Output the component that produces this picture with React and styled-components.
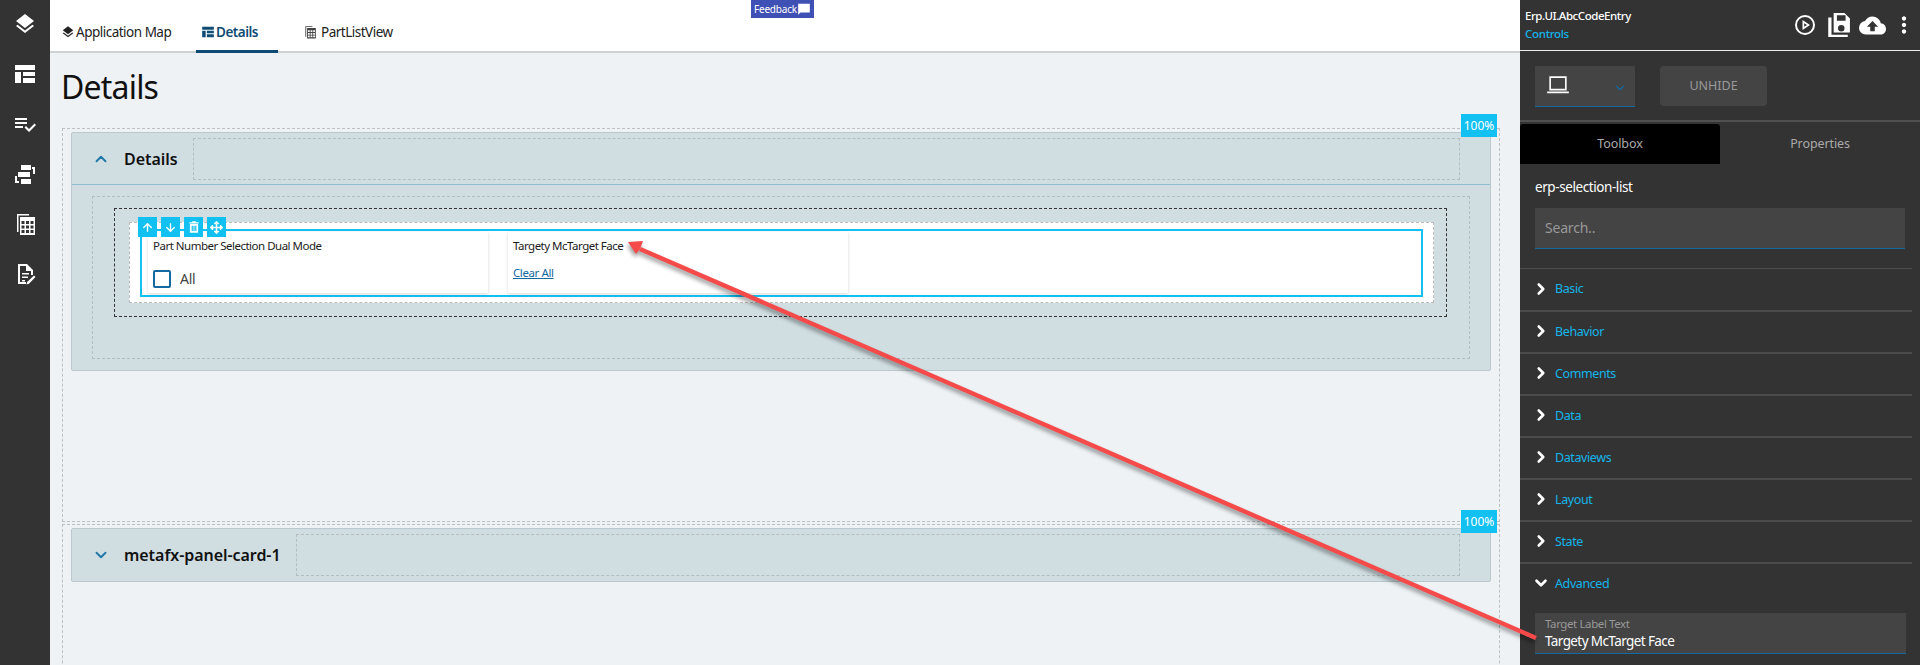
import styled, { createGlobalStyle } from "styled-components";
import { ChevronRight, ChevronDown, ChevronUp, ArrowUp, ArrowDown } from "lucide-react";
import { MdCloudUpload, MdMoreVert } from "react-icons/md";
import { FaArrowsAlt } from "react-icons/fa";

const FONT = `"Noto Sans", "Open Sans", sans-serif`;

const GlobalStyle = createGlobalStyle`
  html, body {
    margin: 0;
    height: 665px;
    overflow: hidden;
    background: #eef2f5;
    font-family: ${FONT};
  }
  * { box-sizing: border-box; }
`;

const Page = styled.div`
  position: relative;
  display: flex;
  width: 1920px;
  height: 665px;
  overflow: hidden;
`;

const Sidebar = styled.nav`
  width: 50px;
  flex: none;
  background: #333333;
  display: flex;
  flex-direction: column;
  align-items: center;
  padding-top: 12px;
  gap: 26px;
`;

const Icon = styled.svg`
  width: ${(p) => p.$size || 24}px;
  height: ${(p) => p.$size || 24}px;
  fill: ${(p) => p.$color || "currentColor"};
  flex: none;
`;

const SideIcon = styled(Icon)`
  width: 24px;
  height: 24px;
  fill: #fff;
`;

const Main = styled.main`
  flex: 1;
  min-width: 0;
  display: flex;
  flex-direction: column;
`;

const TabBar = styled.div`
  height: 53px;
  flex: none;
  background: #fff;
  border-bottom: 2px solid #cfd2d4;
  display: flex;
  align-items: flex-end;
  padding-left: 11px;
`;

const Tab = styled.div`
  display: flex;
  align-items: center;
  gap: 1px;
  height: 34px;
  width: ${(p) => p.$width}px;
  padding-left: ${(p) => p.$inset || 0}px;
  margin-bottom: -2px;
  padding-bottom: 5px;
  font-size: 13.5px;
  letter-spacing: -0.5px;
  color: ${(p) => (p.$active ? "#0f4c75" : "#222")};
  font-weight: ${(p) => (p.$active ? 600 : 400)};
  border-bottom: 3px solid ${(p) => (p.$active ? "#0f4c75" : "transparent")};
`;

const Content = styled.div`
  flex: 1;
  padding: 0 20px 0 12px;
  background: #eef2f5;
`;

const PageTitle = styled.h1`
  margin: 0 0 0 -1px;
  height: 75px;
  font-size: 32px;
  line-height: 68px;
  font-weight: 400;
  letter-spacing: -0.8px;
  color: #111;
`;

const SectionFrame = styled.section`
  position: relative;
  height: ${(p) => p.$height}px;
  margin-bottom: 2px;
  padding: 3px 8px;
  border: 1px dashed #bcc0c2;
`;

const PercentBadge = styled.div`
  position: absolute;
  top: -15px;
  right: 2px;
  width: 36px;
  height: 23px;
  background: #13c0f2;
  color: #fff;
  font-size: 12px;
  line-height: 23px;
  text-align: center;
`;

const Panel = styled.div`
  background: #d0dde1;
  border: 1px solid #b9c9cf;
  border-radius: 2px;
`;

const PanelHeader = styled.div`
  height: 52px;
  display: flex;
  align-items: center;
  padding: 0 30px 0 20px;
  border-bottom: ${(p) => (p.$open ? "1px solid #90bccb" : "none")};
`;

const HeaderChevron = styled.span`
  width: 18px;
  display: flex;
  justify-content: center;
  color: #1f78a8;
  margin-right: 14px;
`;

const PanelName = styled.span`
  font-size: 16px;
  font-weight: 600;
  letter-spacing: -0.05px;
  color: #111;
  margin-right: 15px;
`;

const HeaderSlot = styled.div`
  flex: 1;
  height: 42px;
  border: 1px dashed #b4bdc0;
`;

const PanelBody = styled.div`
  padding: 11px 20px;
`;

const DropZone = styled.div`
  border: 1px dashed #b4bdc0;
  padding: 11px 22px 41px 21px;
`;

const ContainerZone = styled.div`
  border: 1px dashed #333;
  padding: 13px 12px 13px 14px;
`;

const SelectedFrame = styled.div`
  position: relative;
  background: #fff;
  border: 1px dashed #bbb;
  padding: 6px 10px 5px 10px;
`;

const MoveBar = styled.div`
  position: absolute;
  top: -6px;
  left: 8px;
  display: flex;
  gap: 4px;
`;

const MoveButton = styled.div`
  width: 19px;
  height: 20px;
  background: #13c0f2;
  color: #fff;
  display: flex;
  align-items: center;
  justify-content: center;
`;

const SelectedRow = styled.div`
  height: 68px;
  border: 2px solid #13c0f2;
  padding: 1px 6px;
  display: flex;
  gap: 20px;
`;

const Card = styled.div`
  width: 340px;
  height: 61px;
  background: #fff;
  box-shadow: 0 1px 3px rgba(0, 0, 0, 0.16);
  padding: 6px 5px 5px;
  display: flex;
  flex-direction: column;
`;

const CardLabel = styled.div`
  font-size: 11.5px;
  line-height: 16px;
  letter-spacing: -0.5px;
  color: #1c1c1c;
`;

const CheckRow = styled.div`
  margin-top: 15px;
  display: flex;
  align-items: center;
  gap: 9px;
  font-size: 14px;
  letter-spacing: -0.3px;
  color: #444;
`;

const CheckBox = styled.span`
  width: 18px;
  height: 18px;
  border: 2px solid #1469a0;
  border-radius: 2px;
`;

const ClearLink = styled.a`
  margin-top: 11px;
  font-size: 11.5px;
  letter-spacing: -0.4px;
  color: #1469a0;
  text-decoration: underline;
`;

const Feedback = styled.div`
  position: absolute;
  top: 0;
  left: 751px;
  width: 63px;
  height: 18px;
  background: #3f51b5;
  color: #fff;
  font-size: 10px;
  letter-spacing: -0.2px;
  display: flex;
  align-items: center;
  justify-content: space-between;
  padding: 0 3px;
`;

const RightPanel = styled.aside`
  width: 400px;
  flex: none;
  background: #333333;
  color: #fff;
  display: flex;
  flex-direction: column;
`;

const PanelTop = styled.div`
  height: 51px;
  flex: none;
  border-bottom: 1px solid #eee;
  display: flex;
  align-items: center;
  justify-content: space-between;
  padding: 0 3px 0 5px;
`;

const TopTitle = styled.div`
  font-size: 11.5px;
  line-height: 18px;
  letter-spacing: -0.45px;
  font-weight: 500;
`;

const TopLink = styled.div`
  color: #13b5ea;
  letter-spacing: -0.3px;
`;

const TopActions = styled.div`
  display: flex;
  align-items: center;
  gap: 8px;
  color: #fff;
`;

const MoreButton = styled(MdMoreVert)`
  margin-left: -3px;
`;

const DeviceRow = styled.div`
  height: 71px;
  flex: none;
  padding: 15px 15px 0;
  display: flex;
  gap: 25px;
  border-bottom: 2px solid #505050;
`;

const DeviceSelect = styled.div`
  width: 100px;
  height: 41px;
  background: #444;
  border-bottom: 1px solid #1469a0;
  display: flex;
  align-items: center;
  justify-content: space-between;
  padding: 0 8px 2px 10px;
  color: #1469a0;
`;

const DeviceChevron = styled(ChevronDown)`
  margin-top: 5px;
`;

const UnhideButton = styled.div`
  width: 107px;
  height: 40px;
  background: #444;
  border-radius: 4px;
  color: #9a9a9a;
  font-size: 12.5px;
  text-align: center;
  line-height: 40px;
`;

const PanelTabs = styled.div`
  height: 40px;
  flex: none;
  margin-top: 2px;
  display: flex;
`;

const PanelTab = styled.div`
  width: 200px;
  background: ${(p) => (p.$active ? "#000" : "transparent")};
  border-radius: 3px 3px 0 0;
  font-size: 12.5px;
  letter-spacing: -0.1px;
  color: #aaa;
  line-height: 40px;
  text-align: center;
`;

const ToolboxBody = styled.div`
  padding: 15px 15px 0;
`;

const ToolboxName = styled.div`
  font-size: 13.5px;
  line-height: 16px;
  letter-spacing: -0.42px;
  color: #fff;
`;

const SearchBox = styled.div`
  margin-top: 13px;
  height: 41px;
  background: #444;
  border-bottom: 1px solid #1469a0;
  color: #999;
  font-size: 14px;
  letter-spacing: -0.2px;
  padding: 0 10px;
  line-height: 40px;
`;

const Accordion = styled.div`
  margin-top: 19px;
  margin-right: 8px;
`;

const AccordionRow = styled.div`
  height: 42px;
  border-top: ${(p) => (p.$thin ? "1px" : "2px")} solid #4b4b4b;
  display: flex;
  align-items: center;
  padding: 0 0 2px 12px;
  gap: 5px;
  font-size: 12.5px;
  letter-spacing: -0.4px;
  color: #13b5ea;
  svg { color: #fff; }
`;

const AdvancedField = styled.div`
  margin: 9px 14px 0 15px;
  height: 41px;
  background: #444;
  border-bottom: 1px solid #1469a0;
  padding: 3px 10px 0;
`;

const FieldLabel = styled.div`
  font-size: 11.5px;
  line-height: 15px;
  letter-spacing: -0.4px;
  color: #999;
`;

const FieldValue = styled.div`
  margin-top: 1px;
  font-size: 13.5px;
  line-height: 18px;
  letter-spacing: -0.6px;
  color: #fff;
`;

const ArrowOverlay = styled.svg`
  position: absolute;
  top: 0;
  left: 0;
  width: 1920px;
  height: 665px;
  pointer-events: none;
  filter: drop-shadow(-1px 3px 2px rgba(0, 0, 0, 0.4));
`;

const LayersPath = "M11.99 18.54l-7.37-5.73L3 14.07l9 7 9-7-1.63-1.27-7.38 5.74zM12 16l7.36-5.73L21 9l-9-7-9 7 1.63 1.27L12 16z";
const QuiltPath = "M2 3h20v5H2zM2 10h6v11H2zM10 10h12v4H10zM10 16h12v5H10z";
const CheckListPath = "M14 10H2v2h12v-2zm0-4H2v2h12V6zM2 16h8v-2H2v2zm19.5-4.5L23 13l-6.99 7-4.51-4.5L13 14l3.01 3 5.49-5.5z";
const FlowPath = "M8 3h10v5H8zM5 10h12v5H5zM8 17h10v5H8zM19 5h3v7h-2V7h-1zM4 14v5h2v2H2v-7z";
const GridPath = "M4 2h12v1.5H5.5V20H4zM7 5h15v18H7zm1.5 4v3h3V9zm4.5 0v3h3V9zm4.5 0v3h3V9zm-9 4.5v3h3v-3zm4.5 0v3h3v-3zm4.5 0v3h3v-3zm-9 4.5v3h3v-3zm4.5 0v3h3v-3zm4.5 0v3h3v-3z";
const DocEditPath = "M5 2h9l6 6v5h-2V9h-5V4H7v16h6v2H5zM9 11h7v1.5H9zM9 14.5h6V16H9zM9 18h3v1.5H9zM21 13.5l1.5 1.5-6.5 6.8-2.6.7.7-2.6z";
const SavePath = "M8 1h10l5 5v13H8zm3 2v5h8V3zm4 9a3 3 0 1 0 0 6 3 3 0 0 0 0-6zM3 5h3v16h15v2H3z";

const sections = ["Basic", "Behavior", "Comments", "Data", "Dataviews", "Layout", "State"];

const App = () => {
  return (
    <Page>
      <GlobalStyle />
      <Sidebar>
        <SideIcon viewBox="0 0 24 24"><path d={LayersPath} /></SideIcon>
        <SideIcon viewBox="0 0 24 24"><path d={QuiltPath} /></SideIcon>
        <SideIcon viewBox="0 0 24 24"><path d={CheckListPath} /></SideIcon>
        <SideIcon viewBox="0 0 24 24"><path d={FlowPath} /></SideIcon>
        <SideIcon viewBox="0 0 24 24"><path d={GridPath} /></SideIcon>
        <SideIcon viewBox="0 0 24 24"><path d={DocEditPath} /></SideIcon>
      </Sidebar>

      <Main>
        <TabBar>
          <Tab $width={135}>
            <Icon $size={14} viewBox="0 0 24 24"><path d={LayersPath} /></Icon>
            Application Map
          </Tab>
          <Tab $width={82} $active $inset={5}>
            <Icon $size={14} viewBox="0 0 24 24"><path d={QuiltPath} /></Icon>
            Details
          </Tab>
          <Tab $width={200} $inset={25}>
            <Icon $size={14} $color="#444" viewBox="0 0 24 24"><path d={GridPath} /></Icon>
            &nbsp;PartListView
          </Tab>
        </TabBar>
        <Content>
          <PageTitle>Details</PageTitle>
          <SectionFrame $height={394}>
            <PercentBadge>100%</PercentBadge>
            <Panel>
              <PanelHeader $open>
                <HeaderChevron><ChevronUp size={18} strokeWidth={2.5} /></HeaderChevron>
                <PanelName>Details</PanelName>
                <HeaderSlot />
              </PanelHeader>
              <PanelBody>
                <DropZone>
                  <ContainerZone>
                    <SelectedFrame>
                      <MoveBar>
                        <MoveButton><ArrowUp size={13} strokeWidth={2.5} /></MoveButton>
                        <MoveButton><ArrowDown size={13} strokeWidth={2.5} /></MoveButton>
                        <MoveButton>
                          <Icon $size={14} viewBox="0 0 24 24">
                            <path d="M9 2h6v2h5v2H4V4h5zM5 7h14v15H5zm3 3v9h2v-9zm3 0v9h2v-9zm3 0v9h2v-9z" />
                          </Icon>
                        </MoveButton>
                        <MoveButton><FaArrowsAlt size={13} /></MoveButton>
                      </MoveBar>
                      <SelectedRow>
                        <Card>
                          <CardLabel>Part Number Selection Dual Mode</CardLabel>
                          <CheckRow>
                            <CheckBox />
                            All
                          </CheckRow>
                        </Card>
                        <Card>
                          <CardLabel>Targety McTarget Face</CardLabel>
                          <ClearLink>Clear All</ClearLink>
                        </Card>
                      </SelectedRow>
                    </SelectedFrame>
                  </ContainerZone>
                </DropZone>
              </PanelBody>
            </Panel>
          </SectionFrame>
          <SectionFrame $height={200}>
            <PercentBadge>100%</PercentBadge>
            <Panel>
              <PanelHeader>
                <HeaderChevron><ChevronDown size={18} strokeWidth={2.5} /></HeaderChevron>
                <PanelName>metafx-panel-card-1</PanelName>
                <HeaderSlot />
              </PanelHeader>
            </Panel>
          </SectionFrame>
        </Content>
      </Main>

      <RightPanel>
        <PanelTop>
          <TopTitle>
            Erp.UI.AbcCodeEntry
            <TopLink>Controls</TopLink>
          </TopTitle>
          <TopActions>
            <Icon $size={24} viewBox="0 0 24 24">
              <path fillRule="evenodd" d="M12 2a10 10 0 1 1 0 20 10 10 0 0 1 0-20zm0 2a8 8 0 1 0 0 16 8 8 0 0 0 0-16z" />
              <path fillRule="evenodd" d="M9.5 7l7.5 5-7.5 5zm1.7 3.2v3.6l2.8-1.8z" />
            </Icon>
            <Icon $size={26} viewBox="0 0 24 24"><path fillRule="evenodd" d={SavePath} /></Icon>
            <MdCloudUpload size={27} />
            <MoreButton size={26} />
          </TopActions>
        </PanelTop>
        <DeviceRow>
          <DeviceSelect>
            <Icon $size={26} $color="#fff" viewBox="0 0 24 24">
              <path fillRule="evenodd" d="M4 4h16v13H4zm1.5 1.5v10h13v-10zM2 18h20v1.5H2z" />
            </Icon>
            <DeviceChevron size={14} />
          </DeviceSelect>
          <UnhideButton>UNHIDE</UnhideButton>
        </DeviceRow>
        <PanelTabs>
          <PanelTab $active>Toolbox</PanelTab>
          <PanelTab>Properties</PanelTab>
        </PanelTabs>
        <ToolboxBody>
          <ToolboxName>erp-selection-list</ToolboxName>
          <SearchBox>Search..</SearchBox>
        </ToolboxBody>
        <Accordion>
          {sections.map((name, i) => (
            <AccordionRow key={name} $thin={i === 0}>
              <ChevronRight size={18} strokeWidth={3.5} />
              {name}
            </AccordionRow>
          ))}
          <AccordionRow>
            <ChevronDown size={18} strokeWidth={3.5} />
            Advanced
          </AccordionRow>
        </Accordion>
        <AdvancedField>
          <FieldLabel>Target Label Text</FieldLabel>
          <FieldValue>Targety McTarget Face</FieldValue>
        </AdvancedField>
      </RightPanel>

      <Feedback>
        Feedback
        <Icon $size={14} $color="#fff" viewBox="0 0 24 24">
          <path d="M2 3h20v15H6l-4 4z" />
        </Icon>
      </Feedback>

      <ArrowOverlay viewBox="0 0 1920 665">
        <line x1="1536" y1="638" x2="640" y2="249" stroke="#f44a4a" strokeWidth="4.5" />
        <polygon points="628,242 643,241 640,249 636,254" fill="#f44a4a" />
      </ArrowOverlay>
    </Page>
  );
};

export default App;
